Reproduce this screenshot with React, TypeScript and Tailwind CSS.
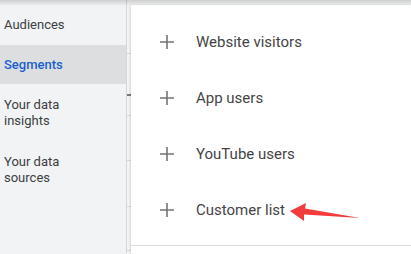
import React from 'react';

const items = ['Website visitors', 'App users', 'YouTube users', 'Customer list'];

const PlusIcon: React.FC = () => (
  <svg width="14" height="14" viewBox="0 0 14 14" className="shrink-0">
    <path d="M7 0v14M0 7h14" stroke="#757575" strokeWidth="1.6" />
  </svg>
);

const App: React.FC = () => {
  return (
    <div className="relative w-[411px] h-[254px] overflow-hidden flex bg-[#f1f3f4] font-['Roboto',sans-serif]">
      {/* Sidebar */}
      <nav className="w-[127px] shrink-0 border-r border-[#d4d6d8] pt-[5px] text-[13px] text-[#3c4043]">
        <div className="h-[40px] flex items-center pl-[4px]">Audiences</div>
        <div className="h-[39px] flex items-center pl-[4px] bg-[#dddee0] text-[#1a5fd0] font-medium">Segments</div>
        <div className="pl-[4px] pt-[13px] pb-[25px] leading-[16px]">
          Your data
          <br />
          insights
        </div>
        <div className="pl-[4px] leading-[16px]">
          Your data
          <br />
          sources
        </div>
      </nav>

      {/* Underlying page strip */}
      <div className="w-[4px] shrink-0 bg-[#f4f4f4] flex flex-col">
        <div className="h-[54px] border-b border-[#d8d8d8]" />
        <div className="h-[42px] border-b-2 border-[#7a7a7a]" />
        <div className="h-[20px] border-b border-[#d8d8d8]" />
        <div className="h-[45px] border-b border-[#d8d8d8]" />
        <div className="h-[46px] border-b border-[#d8d8d8]" />
        <div className="h-[44px] border-b border-[#d8d8d8]" />
      </div>

      {/* Menu panel */}
      <div className="flex-1 mt-[5px] bg-white shadow-[-1px_0_2px_rgba(0,0,0,0.12)]">
        <div className="pt-[9px] pb-[7px] border-b border-[#dadce0]">
          {items.map((label) => (
            <div key={label} className="h-[56px] flex items-center pl-[29px] gap-[22px]">
              <PlusIcon />
              <span className="text-[15px] text-[#444446]">{label}</span>
            </div>
          ))}
        </div>
      </div>

      {/* Top shadow */}
      <div className="absolute inset-x-0 top-0 h-[6px] bg-gradient-to-b from-black/15 to-transparent pointer-events-none" />

      {/* Annotation arrow */}
      <svg className="absolute left-0 top-0 pointer-events-none" width="411" height="254" viewBox="0 0 411 254">
        <polygon
          points="290,211 306,203 305,208.5 360,218 304,214.5 304,221"
          fill="#f23c3c"
        />
      </svg>
    </div>
  );
};

export default App;
